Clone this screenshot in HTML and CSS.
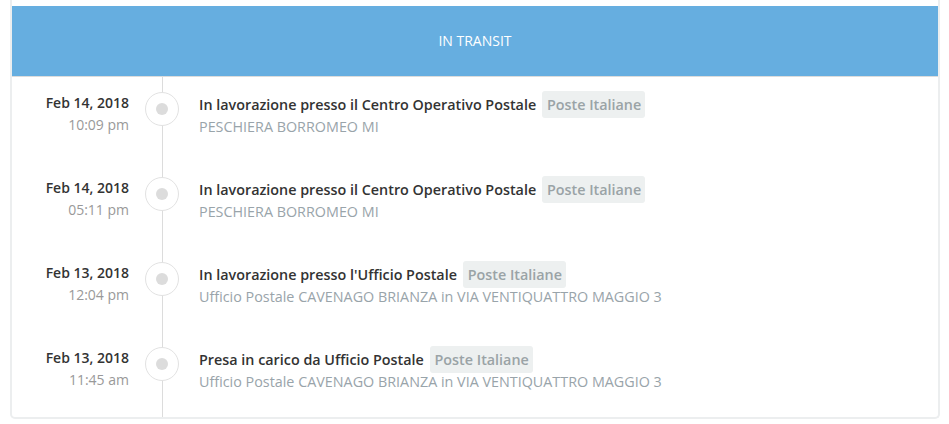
FILE: index.html
```html
<!DOCTYPE html>
<html lang="en">
<head>
    <meta charset="UTF-8">
    <title>Tracking</title>
    <link rel="stylesheet" href="styles.css">
</head>
<body>
    <div class="card">
        <div class="status">IN TRANSIT</div>

        <div class="timeline">
            <!-- checkpoint 1 -->
            <div class="event">
                <div class="when">
                    <div class="date">Feb 14, 2018</div>
                    <div class="time">10:09 pm</div>
                </div>
                <div class="marker"><span class="dot"></span></div>
                <div class="info">
                    <div class="title">In lavorazione presso il Centro Operativo Postale <span class="courier">Poste Italiane</span></div>
                    <div class="place">PESCHIERA BORROMEO MI</div>
                </div>
            </div>

            <!-- checkpoint 2 -->
            <div class="event">
                <div class="when">
                    <div class="date">Feb 14, 2018</div>
                    <div class="time">05:11 pm</div>
                </div>
                <div class="marker"><span class="dot"></span></div>
                <div class="info">
                    <div class="title">In lavorazione presso il Centro Operativo Postale <span class="courier">Poste Italiane</span></div>
                    <div class="place">PESCHIERA BORROMEO MI</div>
                </div>
            </div>

            <!-- checkpoint 3 -->
            <div class="event">
                <div class="when">
                    <div class="date">Feb 13, 2018</div>
                    <div class="time">12:04 pm</div>
                </div>
                <div class="marker"><span class="dot"></span></div>
                <div class="info">
                    <div class="title">In lavorazione presso l'Ufficio Postale <span class="courier">Poste Italiane</span></div>
                    <div class="place">Ufficio Postale CAVENAGO BRIANZA in VIA VENTIQUATTRO MAGGIO 3</div>
                </div>
            </div>

            <!-- checkpoint 4 -->
            <div class="event">
                <div class="when">
                    <div class="date">Feb 13, 2018</div>
                    <div class="time">11:45 am</div>
                </div>
                <div class="marker"><span class="dot"></span></div>
                <div class="info">
                    <div class="title">Presa in carico da Ufficio Postale <span class="courier">Poste Italiane</span></div>
                    <div class="place">Ufficio Postale CAVENAGO BRIANZA in VIA VENTIQUATTRO MAGGIO 3</div>
                </div>
            </div>
        </div>
    </div>
</body>
</html>
```

FILE: styles.css
```css
body {
    margin: 0 9px 0 10px;
    font-family: 'Open Sans', sans-serif;
    font-size: 14px;
    background: #fff;
    color: #333;
}

.card {
    padding-top: 6px;
    border: 2px solid #eceeef;
    border-top: none;
    border-radius: 0 0 5px 5px;
    background: #fff;
}

.status {
    height: 70px;
    line-height: 70px;
    text-align: center;
    color: #fff;
    background: #66aee0;
    border-bottom: 1px solid #dcdcdc;
}

.event {
    display: grid;
    grid-template-columns: 117px 34px 1fr;
    height: 85px;
}

.when {
    padding-top: 15px;
    text-align: right;
    line-height: 22px;
}

.date {
    font-weight: 600;
    color: #333;
}

.time {
    color: #999;
}

.marker {
    margin-left: 16px;
    width: 34px;
    padding-top: 15px;
    background: linear-gradient(#dcdcdc, #dcdcdc) center / 1px 100% no-repeat;
}

.dot {
    display: flex;
    justify-content: center;
    align-items: center;
    box-sizing: border-box;
    width: 34px;
    height: 34px;
    border: 1px solid #e2e2e2;
    border-radius: 50%;
    background: #fff;
}

.dot::after {
    content: "";
    width: 12px;
    height: 12px;
    border-radius: 50%;
    background: #dcdcdc;
}

.info {
    padding: 14px 0 0 36px;
    font-size: 14.35px;
}

.title {
    font-weight: 600;
    line-height: 26px;
    color: #333;
}

.courier {
    display: inline-block;
    margin-left: 2px;
    padding: 0 4px 0 5px;
    line-height: 27px;
    border-radius: 3px;
    background: #edf0f0;
    color: #9aa3a6;
}

.place {
    margin-top: -1px;
    line-height: 19px;
    color: #99a4aa;
}
```
